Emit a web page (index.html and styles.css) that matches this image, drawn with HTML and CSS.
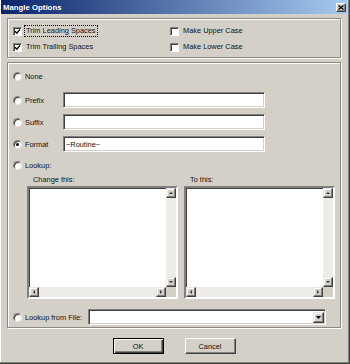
FILE: index.html
```html
<!DOCTYPE html>
<html>
<head>
<meta charset="utf-8">
<title>Mangle Options</title>
<link rel="stylesheet" href="styles.css">
</head>
<body>
<div class="window">
  <div class="titlebar">
    <span class="title">Mangle Options</span>
    <span class="close"><svg width="6" height="5" viewBox="0 0 6 5"><path d="M0.5 0.5 L5.5 4.5 M5.5 0.5 L0.5 4.5" stroke="#000" stroke-width="1.3" fill="none"/></svg></span>
  </div>
  <div class="content">
    <div class="group group-case">
      <div class="check"><span class="box"><svg width="7" height="7" viewBox="0 0 7 7"><polyline points="1,3.3 2.8,5.2 6,1.4" stroke="#000" stroke-width="1.4" fill="none"/></svg></span><span class="lbl focus">Trim Leading Spaces</span></div>
      <div class="check"><span class="box"></span><span class="lbl">Make Upper Case</span></div>
      <div class="check"><span class="box"><svg width="7" height="7" viewBox="0 0 7 7"><polyline points="1,3.3 2.8,5.2 6,1.4" stroke="#000" stroke-width="1.4" fill="none"/></svg></span><span class="lbl">Trim Trailing Spaces</span></div>
      <div class="check"><span class="box"></span><span class="lbl">Make Lower Case</span></div>
    </div>

    <div class="group group-mode">
      <div class="row row-none"><span class="radio"></span><span class="rlbl">None</span></div>
      <div class="row row-prefix"><span class="radio"></span><span class="rlbl">Prefix</span><span class="field"></span></div>
      <div class="row row-suffix"><span class="radio"></span><span class="rlbl">Suffix</span><span class="field"></span></div>
      <div class="row row-format"><span class="radio on"></span><span class="rlbl">Format</span><span class="field">~Routine~</span></div>
      <div class="row row-lookup"><span class="radio"></span><span class="rlbl">Lookup:</span></div>
      <div class="lists">
        <div class="listcol">
          <div class="listlbl">Change this:</div>
          <div class="listbox">
            <div class="listarea"></div>
            <div class="vscroll">
              <span class="arrow"><svg width="4" height="2" viewBox="0 0 4 2"><polygon points="0,2 2,0 4,2" fill="#333"/></svg></span>
              <span class="track"></span>
              <span class="arrow"><svg width="4" height="2" viewBox="0 0 4 2"><polygon points="0,0 2,2 4,0" fill="#333"/></svg></span>
            </div>
            <div class="hscroll">
              <span class="arrow"><svg width="2" height="4" viewBox="0 0 2 4"><polygon points="2,0 0,2 2,4" fill="#333"/></svg></span>
              <span class="track"></span>
              <span class="arrow"><svg width="2" height="4" viewBox="0 0 2 4"><polygon points="0,0 2,2 0,4" fill="#333"/></svg></span>
            </div>
            <div class="corner"></div>
          </div>
        </div>
        <div class="listcol">
          <div class="listlbl">To this:</div>
          <div class="listbox">
            <div class="listarea"></div>
            <div class="vscroll">
              <span class="arrow"><svg width="4" height="2" viewBox="0 0 4 2"><polygon points="0,2 2,0 4,2" fill="#333"/></svg></span>
              <span class="track"></span>
              <span class="arrow"><svg width="4" height="2" viewBox="0 0 4 2"><polygon points="0,0 2,2 4,0" fill="#333"/></svg></span>
            </div>
            <div class="hscroll">
              <span class="arrow"><svg width="2" height="4" viewBox="0 0 2 4"><polygon points="2,0 0,2 2,4" fill="#333"/></svg></span>
              <span class="track"></span>
              <span class="arrow"><svg width="2" height="4" viewBox="0 0 2 4"><polygon points="0,0 2,2 0,4" fill="#333"/></svg></span>
            </div>
            <div class="corner"></div>
          </div>
        </div>
      </div>
      <div class="row row-file"><span class="radio"></span><span class="rlbl rlbl-file">Lookup from File:</span>
        <span class="combo"><span class="combo-btn"><svg width="5" height="3" viewBox="0 0 5 3"><polygon points="0,0 2.5,3 5,0" fill="#000"/></svg></span></span>
      </div>
    </div>

    <div class="buttons">
      <div class="btn default">OK</div>
      <div class="btn">Cancel</div>
    </div>
  </div>
</div>
</body>
</html>
```
FILE: styles.css
```css
* { box-sizing: border-box; }
html, body { margin: 0; padding: 0; }
body {
  width: 350px;
  height: 364px;
  overflow: hidden;
  background: #d4d0c8;
  font-family: "Liberation Sans", Arial, sans-serif;
  font-size: 7.4px;
  color: #111;
}
.window {
  width: 350px;
  height: 364px;
  padding: 0 2px 2px 1px;
  border-right: 1px solid #404040;
  border-bottom: 1px solid #404040;
  box-shadow: inset -1px -1px 0 #808080, inset 1px 0 0 #fff;
  background: #d4d0c8;
}
.titlebar {
  height: 14px;
  display: flex;
  align-items: center;
  justify-content: space-between;
  padding: 0 1px 0 2px;
  background: linear-gradient(to right, #0a246a, #a6caf0);
}
.title {
  color: #fff;
  font-weight: bold;
  font-size: 7.8px;
}
.close {
  width: 10px;
  height: 9px;
  background: #d4d0c8;
  border: 1px solid;
  border-color: #fff #404040 #404040 #fff;
  box-shadow: inset -1px -1px 0 #808080;
  display: flex;
  align-items: center;
  justify-content: center;
}
.content { padding: 4px 6px 0; }
.group {
  border: 1px solid #8c8983;
  box-shadow: inset 1px 1px 0 #fff, 1px 1px 0 #fff;
}
.group-case {
  height: 40px;
  display: grid;
  grid-template-columns: 157px 1fr;
  grid-auto-rows: 12px;
  row-gap: 4px;
  padding: 6px 5px 0;
}
.check { display: flex; align-items: center; gap: 3px; }
.box {
  width: 9px;
  height: 9px;
  flex: none;
  background: #fff;
  border: 1px solid;
  border-color: #808080 #fff #fff #808080;
  box-shadow: inset 1px 1px 0 #404040;
  display: flex;
  align-items: center;
  justify-content: center;
}
.lbl { padding: 1px 1px; line-height: 8px; }
.focus { outline: 1px dotted #000; outline-offset: 0; }

.group-mode {
  height: 266px;
  margin-top: 4px;
  padding: 5px 5px 2px;
  display: flex;
  flex-direction: column;
}
.row { display: flex; align-items: center; height: 16px; flex: none; }
.row-prefix { margin-top: 8px; }
.row-suffix, .row-format { margin-top: 6px; }
.row-lookup { margin-top: 5px; }
.row-file { margin-top: 10px; }
.radio {
  width: 9px;
  height: 9px;
  flex: none;
  margin-right: 3px;
  border-radius: 50%;
  background: #fff;
  border: 1px solid;
  border-color: #808080 #e8e6e2 #e8e6e2 #808080;
  box-shadow: inset 1px 1px 0 #404040;
  display: flex;
  align-items: center;
  justify-content: center;
}
.radio.on::after {
  content: "";
  width: 3px;
  height: 3px;
  border-radius: 50%;
  background: #000;
}
.rlbl { width: 38px; flex: none; }
.rlbl-file { width: 63px; }
.field {
  width: 202px;
  height: 16px;
  background: #fff;
  border: 1px solid;
  border-color: #808080 #fff #fff #808080;
  box-shadow: inset 1px 1px 0 #404040, inset -1px -1px 0 #d4d0c8;
  padding: 0 2px;
  display: flex;
  align-items: center;
}
.lists { display: flex; gap: 6px; padding-left: 14px; }
.listcol { width: 152px; }
.listlbl { height: 12px; padding-left: 6px; display: flex; align-items: center; }
.listbox {
  margin-top: 1px;
  height: 113px;
  background: #fff;
  border: 2px solid;
  border-color: #808080 #fff #fff #808080;
  box-shadow: inset 1px 1px 0 #404040, inset -1px -1px 0 #d4d0c8;
  display: grid;
  grid-template-columns: 1fr 10px;
  grid-template-rows: 1fr 10px;
}
.listarea { grid-column: 1; grid-row: 1; }
.vscroll {
  grid-column: 2; grid-row: 1;
  display: flex; flex-direction: column;
  background: #eeece8;
}
.hscroll {
  grid-column: 1; grid-row: 2;
  display: flex;
  background: #eeece8;
}
.corner { grid-column: 2; grid-row: 2; background: #d4d0c8; }
.track { flex: 1; }
.arrow {
  width: 10px;
  height: 10px;
  flex: none;
  background: #d4d0c8;
  border: 1px solid;
  border-color: #e8e6e2 #404040 #404040 #e8e6e2;
  box-shadow: inset -1px -1px 0 #808080, inset 1px 1px 0 #fff;
  display: flex;
  align-items: center;
  justify-content: center;
}
.combo {
  width: 238px;
  height: 16px;
  background: #fff;
  border: 1px solid;
  border-color: #808080 #fff #fff #808080;
  box-shadow: inset 1px 1px 0 #404040, inset -1px -1px 0 #d4d0c8;
  display: flex;
  align-items: center;
  justify-content: flex-end;
  padding: 1px 1px 0 0;
}
.combo-btn {
  width: 11px;
  height: 11px;
  background: #d4d0c8;
  border: 1px solid;
  border-color: #e8e6e2 #404040 #404040 #e8e6e2;
  box-shadow: inset -1px -1px 0 #808080, inset 1px 1px 0 #fff;
  display: flex;
  align-items: center;
  justify-content: center;
}
.buttons {
  display: flex;
  justify-content: center;
  gap: 21px;
  margin-top: 10px;
}
.btn {
  width: 51px;
  height: 16px;
  background: #d4d0c8;
  border: 1px solid;
  border-color: #fff #404040 #404040 #fff;
  box-shadow: inset -1px -1px 0 #808080;
  display: flex;
  align-items: center;
  justify-content: center;
}
.btn.default {
  border: 1px solid #000;
  box-shadow: inset 1px 1px 0 #fff, inset -1px -1px 0 #404040, inset -2px -2px 0 #808080;
}
```
